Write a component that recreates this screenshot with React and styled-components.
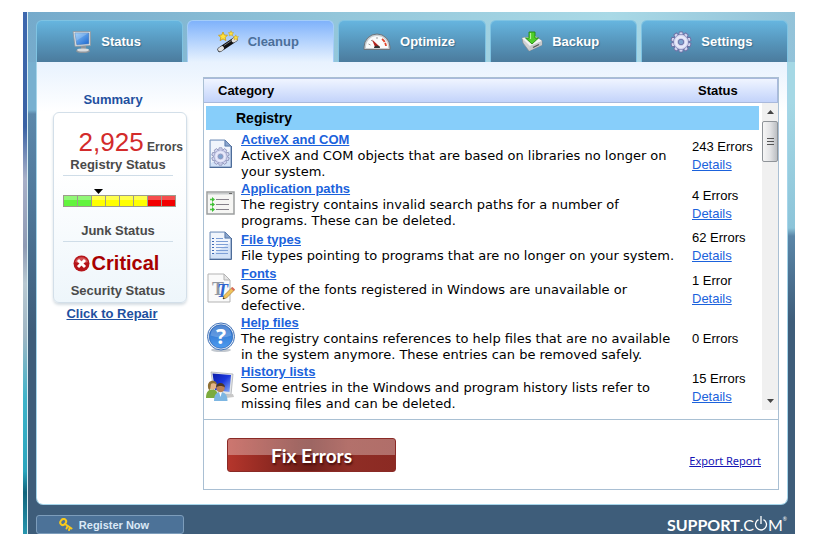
import styled, { createGlobalStyle } from "styled-components";

const GlobalStyle = createGlobalStyle`
  * {
    box-sizing: border-box;
  }
  body {
    margin: 0;
    background: #fff;
    font-family: "Liberation Sans", Arial, sans-serif;
    font-size: 13px;
    color: #000;
  }
`;

const Desktop = styled.div`
  min-height: 100vh;
  display: flex;
  padding: 12px 24px 0 23px;
`;

const Wallpaper = styled.div`
  width: 5px;
  border-right: 1px solid #d6ecf2;
  background: linear-gradient(
    #3d68ae,
    #3a62a4 22%,
    #a9b0c8 32%,
    #8f9bb4 45%,
    #b9c9d2 52%,
    #9fb6c4 62%,
    #3fb4ca 74%,
    #2aa5bd 88%,
    #11647c 92%,
    #2796ae
  );
`;

const Frame = styled.main`
  flex: 1;
  display: flex;
  flex-direction: column;
  padding: 8px 7px 0 8px;
  background:
    linear-gradient(100deg, #75aacb, #93c6da 40%, #a9d9e6 75%, #92c2d9) 0 0 /
      100% 50px no-repeat,
    linear-gradient(
        #78b0d0 98px,
        #5c88ab 102px,
        #4e7698 200px,
        #3e5d7a 320px
      )
      0 0 / 50% 100% no-repeat,
    linear-gradient(#a5d8e5 90px, #8cc4d9 216px, #5a86a8 224px, #3e5d7a 310px);
`;

const Tabs = styled.nav`
  display: grid;
  grid-template-columns: repeat(5, 1fr);
  column-gap: 4px;
`;

const Tab = styled.button`
  height: 42px;
  display: flex;
  align-items: center;
  justify-content: center;
  gap: 9px;
  padding: 0 6px 0 0;
  border: 1px solid ${(props) => (props.$active ? "#a4cdf8" : "#7fc3e2")};
  border-bottom: 0;
  border-radius: 6px 6px 0 0;
  background: ${(props) =>
    props.$active
      ? "linear-gradient(#7fb2fb, #b4d3fd 50%, #e8f2fe)"
      : "linear-gradient(#66b5df, #5797bd 50%, #4b7b9d)"};
  color: ${(props) => (props.$active ? "#4b6f99" : "#fff")};
  font: bold 13px "Liberation Sans", Arial, sans-serif;
  text-shadow: ${(props) => (props.$active ? "none" : "1px 1px 1px #3c6c8c")};
`;

const Panel = styled.div`
  display: flex;
  padding: 15px 8px 14px 16px;
  border: 1px solid #a6d5ea;
  border-top: 0;
  border-radius: 0 0 7px 7px;
  background: linear-gradient(#e8f2fe, #fff 50px);
`;

const Sidebar = styled.aside`
  width: 134px;
  margin-right: 16px;
  display: flex;
  flex-direction: column;
  align-items: center;
  padding-top: 15px;
`;

const SummaryTitle = styled.h2`
  margin: 0 14px 4px 0;
  font-size: 13px;
  line-height: 16px;
  color: #1f50a0;
`;

const Card = styled.section`
  width: 100%;
  padding: 14px 3px 0 9px;
  border: 1px solid #d3dfe9;
  border-radius: 6px;
  background: linear-gradient(#fff 30%, #eef6fb);
  box-shadow: 0 2px 3px #d5dde3;
`;

const ErrorCount = styled.div`
  height: 30px;
  text-align: right;
  font-size: 12px;
  font-weight: bold;
  line-height: 30px;
  color: #4a4a4a;
`;

const Count = styled.span`
  font-size: 26px;
  font-weight: normal;
  color: #d32b2b;
`;

const StatusLabel = styled.div`
  height: 19px;
  margin-right: 10px;
  text-align: center;
  font-weight: bold;
  line-height: 16px;
  color: #4a4a4a;
  border-bottom: ${(props) => (props.$last ? "0" : "1px solid #cfdde8")};
`;

const Meter = styled.div`
  height: 47px;
  padding-top: 11px;
`;

const Critical = styled.div`
  display: flex;
  align-items: center;
  justify-content: center;
  gap: 2px;
  height: 41px;
  padding: 2px 14px 0 0;
  font-size: 20px;
  font-weight: bold;
  color: #a80000;
`;

const RepairLink = styled.a`
  margin: 2px 16px 0 0;
  font-weight: bold;
  line-height: 18px;
  color: #1f50a0;
`;

const Results = styled.section`
  flex: 1;
  display: flex;
  flex-direction: column;
  border: 1px solid #a9bfd3;
  background: #fff;
`;

const ListArea = styled.div`
  display: grid;
  grid-template-columns: 1fr 16px;
  padding-bottom: 9px;
  border-bottom: 1px solid #a9c0d3;
`;

const Table = styled.table`
  display: contents;
`;

const TableHead = styled.thead`
  grid-column: 1 / -1;
  display: block;
  border: 1px solid #a9b9dc;
  border-width: 1px 1px 1px 0;
  background: linear-gradient(#f0f5ff, #d9e4fd 50%, #c3d3fa);
`;

const HeadRow = styled.tr`
  display: grid;
  grid-template-columns: 1fr 79px;
  height: 23px;
  padding-left: 14px;
  line-height: 23px;
  text-align: left;
`;

const TableBody = styled.tbody`
  display: block;
  height: 307px;
  overflow: hidden;
  padding: 3px 3px 0 2px;
`;

const GroupRow = styled.tr`
  display: block;
  height: 24px;
  margin-bottom: 1px;
  padding-left: 30px;
  background: #87cefa;
  font-size: 14px;
  line-height: 24px;
`;

const ItemRow = styled.tr`
  display: grid;
  grid-template-columns: 35px 1fr 67px;
  align-items: center;
  min-height: 35px;
`;

const Cell = styled.td`
  display: block;
  padding: 0;
`;

const GroupName = styled(Cell)`
  text-align: left;
`;

const IconCell = styled(Cell)`
  height: 35px;
`;

const ItemLink = styled.a`
  display: block;
  font-weight: bold;
  line-height: 17px;
  color: #1b62dc;
`;

const Description = styled.p`
  margin: 0;
  padding-right: 8px;
  font-family: "DejaVu Sans", Verdana, sans-serif;
  line-height: 16px;
`;

const StatusCell = styled(Cell)`
  line-height: 18px;
`;

const DetailsLink = styled.a`
  display: block;
  color: #1b62dc;
`;

const ScrollTrack = styled.div`
  display: flex;
  flex-direction: column;
  background: #f0f0f0;
`;

const ScrollButton = styled.button`
  height: 18px;
  padding: 0;
  border: 0;
  background: transparent;
  margin-top: ${(props) => (props.$end ? "auto" : "0")};
  display: grid;
  place-items: center;
`;

const Thumb = styled.div`
  height: 41px;
  display: grid;
  place-items: center;
  border: 1px solid #8f9499;
  border-radius: 2px;
  background: linear-gradient(90deg, #f6f6f6, #e3e4e6 50%, #bcbfc3);
`;

const Actions = styled.div`
  flex: 1;
  display: flex;
  align-items: flex-start;
  justify-content: space-between;
  padding: 18px 17px 17px 23px;
`;

const FixButton = styled.button`
  width: 169px;
  height: 34px;
  padding: 0;
  border: 1px solid #8a2a26;
  border-radius: 3px;
  background:
    linear-gradient(rgba(255, 255, 255, 0.32), rgba(255, 255, 255, 0.32)) 0 0 /
      100% 50% no-repeat,
    linear-gradient(90deg, #b5362c, #75201a 42%, #6f1e19 50%, #8f2d25 72%, #8b2a23);
  color: #fff;
  font: bold 19px Lato, sans-serif;
  text-shadow: 1px 2px 2px #4a0f0c;
`;

const ExportLink = styled.a`
  margin-top: 15px;
  font: 11px/16px "Noto Sans", Tahoma, sans-serif;
  color: #1414b4;
`;

const Footer = styled.footer`
  display: flex;
  justify-content: space-between;
  align-items: flex-start;
  padding-top: 10px;
`;

const RegisterButton = styled.button`
  width: 148px;
  height: 19px;
  display: flex;
  align-items: center;
  justify-content: center;
  gap: 6px;
  padding: 0 12px 0 0;
  border: 1px solid #7d9dbb;
  border-radius: 3px;
  background: #4c7298;
  color: #dbe9f7;
  font: bold 11px "Liberation Sans", Arial, sans-serif;
`;

const Logo = styled.div`
  display: flex;
  align-items: center;
  padding-right: 1px;
  color: #fff;
  font: 16px/19px Lato, sans-serif;
`;

const LogoBold = styled.span`
  font-weight: bold;
`;

const Registered = styled.sup`
  align-self: flex-start;
  font-size: 5px;
  line-height: 8px;
`;

function MonitorIcon() {
  return (
    <svg width="20" height="24" viewBox="0 0 20 24" aria-hidden="true">
      <defs>
        <linearGradient id="screen" x1="0" y1="0" x2="1" y2="1">
          <stop offset="0" stopColor="#8cc8fa" />
          <stop offset="1" stopColor="#1b66d0" />
        </linearGradient>
      </defs>
      <ellipse cx="11" cy="21" rx="7" ry="2" fill="#8d959c" />
      <path d="M9 16h5v4H9z" fill="#8e959c" />
      <ellipse cx="11" cy="20" rx="6" ry="1.6" fill="#d9dcdf" />
      <path d="M1 1.500h17.500v14l-15.500 1z" fill="#d9dde1" stroke="#8b959e" strokeWidth=".8" />
      <path d="M3 3h13.800v10.800l-12 1z" fill="url(#screen)" stroke="#3f74b5" strokeWidth=".5" />
      <path d="M3 3h13.500L4 11z" fill="#fff" opacity=".2" />
    </svg>
  );
}

function WandIcon() {
  const star = "M0-4.500l1.300 3 3.200.3-2.400 2.100.8 3.200L0 2.400l-2.900 1.700.8-3.200-2.400-2.100 3.200-.3z";
  return (
    <svg width="22" height="24" viewBox="0 0 22 24" aria-hidden="true">
      <path d="M3 19.500L18 9.500" stroke="#111" strokeWidth="5" strokeLinecap="round" />
      <path d="M3 19.500l2-1.300M16.500 10.500l2-1.300" stroke="#e0e0e0" strokeWidth="4" strokeLinecap="round" />
      <path d="M7 15.500l7-4.700" stroke="#777" strokeWidth="1" />
      <g fill="#ffe23f" stroke="#c99a12" strokeWidth=".8">
        <path d={star} transform="translate(6 6.500)" />
        <path d={star} transform="translate(14 3.500) scale(.6)" />
        <path d={star} transform="translate(18.800 7.500) scale(.6)" />
      </g>
    </svg>
  );
}

function GaugeIcon() {
  return (
    <svg width="28" height="18" viewBox="0 0 28 18" aria-hidden="true">
      <path d="M1 16.500V14a13 13 0 0 1 26 0v2.500z" fill="#c9ced2" stroke="#6d757c" strokeWidth="1" />
      <path d="M3 15v-1a11 11 0 0 1 22 0v1z" fill="#fbfbfb" />
      <path d="M5.500 11l2 1M8 7l1.500 1.500M14 4v2" stroke="#999" strokeWidth="1" />
      <path d="M19 6q3.500 2.500 4 7" fill="none" stroke="#e0452b" strokeWidth="1.800" strokeDasharray="4 1" />
      <path d="M9 6.500l8 7.500h-5z" fill="#b3201a" />
      <path d="M11 15a3 2.600 0 0 1 6 0z" fill="#333" />
    </svg>
  );
}

function BackupIcon() {
  return (
    <svg width="22" height="21" viewBox="0 0 22 21" aria-hidden="true">
      <path d="M1 7l13-2 7 5v4L8 20 2 12z" fill="#cfd1d3" stroke="#85898d" strokeWidth=".7" />
      <path d="M1 7l13-2 7 5-12 5z" fill="#f4f4f4" />
      <path d="M9 15l-1 5 13-6v-4z" fill="#c6c8ca" />
      <path d="M12 16.500l6-3" stroke="#555" strokeWidth="1.300" />
      <path d="M8 1h6v6h3.500L11 13 4.500 7H8z" fill="#4fce2b" stroke="#248a12" strokeWidth=".9" />
      <path d="M9.500 2v6" stroke="#b2f29b" strokeWidth="1.200" />
    </svg>
  );
}

function Gear({ size, edge = "#6b70a4" }) {
  const teeth = [0, 36, 72, 108, 144, 180, 216, 252, 288, 324];
  return (
    <svg width={size} height={size} viewBox="-12 -12 24 24" aria-hidden="true">
      <g fill="#d3d6f0" stroke={edge} strokeWidth="1">
        {teeth.map((angle) => (
          <path key={angle} d="M-2.600-7l.8-4h3.600l.8 4z" transform={`rotate(${angle})`} />
        ))}
        <circle r="8" />
      </g>
      <circle r="7.800" fill="#d3d6f0" />
      <circle r="5.500" fill="none" stroke="#e9ebfa" strokeWidth="2" />
      <circle r="3" fill="#7ea3cf" stroke={edge} strokeWidth="1" />
    </svg>
  );
}

function Page({ children }) {
  return (
    <>
      <path d="M4 2h15l6 6v21H4z" fill="#d3e2f7" stroke="#7590b8" strokeWidth="1" />
      <path d="M5 3h13v6h6v4L5 25z" fill="#fff" opacity=".65" />
      <path d="M19 2v6h6z" fill="#8ba7cf" stroke="#5f7ca8" strokeWidth="1" />
      {children}
      <path d="M3.500 29.500h22V8" fill="none" stroke="#4d6c99" strokeWidth="1" />
    </>
  );
}

function ActiveXIcon() {
  return (
    <svg width="30" height="32" viewBox="0 0 30 32" aria-hidden="true">
      <Page>
        <svg x="5" y="9" width="19" height="19" viewBox="0 0 19 19">
          <Gear size={19} edge="#8c92b8" />
        </svg>
      </Page>
    </svg>
  );
}

function PathsIcon() {
  return (
    <svg width="30" height="32" viewBox="0 0 30 32" aria-hidden="true">
      <path d="M1 5h27v22H1z" fill="#f6f6f4" stroke="#9c9e9f" strokeWidth="1.500" />
      <path d="M2 6h25v1.500H2z" fill="#c9cccd" />
      <path d="M23 6.500h3" stroke="#666" strokeWidth="1" />
      <path d="M10 12.500h13M10 17.500h13M10 22.500h13" stroke="#85818a" strokeWidth="1" />
      <path d="M4 12.500h3M4 17.500h3M4 22.500h3" stroke="#4ac73f" strokeWidth="1.500" />
      <path d="M6 10l3 2.500L6 15zM6 15l3 2.500L6 20zM6 20l3 2.500L6 25z" fill="#3fbf36" />
    </svg>
  );
}

function FileIcon() {
  return (
    <svg width="30" height="32" viewBox="0 0 30 32" aria-hidden="true">
      <Page>
        <path d="M10 8.500h7M10 11.500h12M10 14.500h12M10 17.500h12M10 20.500h12M10 23.500h12" stroke="#7d9fd6" strokeWidth="1" />
        <path d="M6 8.500h2M6 11.500h2M6 14.500h2M6 17.500h2M6 20.500h2M6 23.500h2" stroke="#3d69b5" strokeWidth="1" />
      </Page>
    </svg>
  );
}

function FontIcon() {
  return (
    <svg width="30" height="32" viewBox="0 0 30 32" aria-hidden="true">
      <path d="M2 2h16l6 6v22H2z" fill="#fafafa" stroke="#b3b3b3" strokeWidth="1" />
      <path d="M18 2v6h6z" fill="#e6e6e6" stroke="#b3b3b3" strokeWidth="1" />
      <g fontFamily="Liberation Serif, serif" fontWeight="bold" fontSize="18">
        <text x="6" y="23" fill="#9298a3">T</text>
        <text x="11" y="25" fill="#2f66cf" fontStyle="italic">T</text>
      </g>
      <path d="M17 27l1-3.500 8-8 2.500 2.500-8 8z" fill="#f0c35a" stroke="#99702a" strokeWidth=".6" />
      <path d="M25 16.500l1.500-1.500 2.500 2.500-1.500 1.500z" fill="#d96a5a" />
      <path d="M17 27l.5-1.800 1.300 1.300z" fill="#222" />
    </svg>
  );
}

function HelpIcon() {
  return (
    <svg width="30" height="32" viewBox="0 0 30 32" aria-hidden="true">
      <defs>
        <linearGradient id="help" x1="0" y1="0" x2="0" y2="1">
          <stop offset="0" stopColor="#2468c6" />
          <stop offset="1" stopColor="#4e9cf0" />
        </linearGradient>
      </defs>
      <ellipse cx="15" cy="29" rx="10" ry="2" fill="#c2c8cf" />
      <circle cx="15" cy="15.500" r="13.500" fill="#e9f2fc" stroke="#4272b6" strokeWidth="1" />
      <circle cx="15" cy="15.500" r="11.800" fill="url(#help)" stroke="#2258a8" strokeWidth=".6" />
      <path d="M4.500 14.500a10.500 10.500 0 0 1 21 0q-10 4-21 0z" fill="#fff" opacity=".2" />
      <text x="15" y="23" textAnchor="middle" fontFamily="Open Sans, sans-serif" fontWeight="bold" fontSize="21" fill="#fff">
        ?
      </text>
    </svg>
  );
}

function UsersIcon() {
  return (
    <svg width="30" height="32" viewBox="0 0 30 32" aria-hidden="true">
      <defs>
        <linearGradient id="night" x1="0" y1="0" x2="1" y2="1">
          <stop offset="0" stopColor="#0a1ca8" />
          <stop offset=".5" stopColor="#1a36dc" />
          <stop offset="1" stopColor="#8db4f8" />
        </linearGradient>
      </defs>
      <path d="M5 2l22 2-2 21-17-2z" fill="#e3e5e8" stroke="#a4a8ae" strokeWidth=".7" />
      <path d="M6.500 3.500L25 5l-1.500 17L9 20z" fill="url(#night)" />
      <path d="M20 25l7-1 1 3-8 1z" fill="#c8c8c8" />
      <path d="M0 28c0-7 3-8.500 6.500-8.500S12 22 12 28z" fill="#7bab3e" />
      <circle cx="6.500" cy="15.500" r="4" fill="#e5b487" />
      <path d="M2 17c-1-8 9-8 9-2-2-2-5-2-6-1l-1 6c-1 0-2-1-2-3z" fill="#8f7034" />
      <path d="M8 31c0-7 3-9 6.500-9s7 2 7 9z" fill="#7db6e2" />
      <path d="M13 22h3l-1.500 5z" fill="#fff" />
      <circle cx="14.500" cy="18" r="4.200" fill="#b98055" />
      <path d="M10 17.500c0-6 9-6 9 0-2-2-7-2-9 0z" fill="#4a3626" />
    </svg>
  );
}

function LevelMeter() {
  const colors = ["#62f43d", "#62f43d", "#ff0", "#ff0", "#ff0", "#ff0", "#f20000", "#f20000"];
  return (
    <svg width="113" height="20" viewBox="0 0 113 20" role="img" aria-label="Junk level">
      <path d="M31 2h9l-4.500 5z" fill="#000" />
      {colors.map((color, index) => (
        <g key={index}>
          <rect x={index * 14 + 0.5} y="8.500" width="14" height="11" fill={color} stroke="#9c9c8c" />
          <rect x={index * 14 + 1} y="9" width="13" height="4" fill="#fff" opacity=".3" />
        </g>
      ))}
    </svg>
  );
}

function CriticalIcon() {
  return (
    <svg width="17" height="17" viewBox="0 0 17 17" aria-hidden="true">
      <circle cx="8.500" cy="8.500" r="8" fill="#b5151a" />
      <path d="M2 7a6.800 6.800 0 0 1 13 0q-6.500 2.500-13 0z" fill="#e67b7b" opacity=".6" />
      <path d="M5 5l7 7M12 5l-7 7" stroke="#fff" strokeWidth="3" />
    </svg>
  );
}

function KeyIcon() {
  return (
    <svg width="14" height="13" viewBox="0 0 14 13" aria-hidden="true">
      <ellipse cx="4.200" cy="4" rx="3.200" ry="2.600" transform="rotate(-50 4.200 4)" fill="none" stroke="#f7c81e" strokeWidth="2" />
      <path d="M6 6l6.500 4.500M8.500 8l-1 2.500M11 9.700l-1 2.300" stroke="#f7c81e" strokeWidth="2" strokeLinecap="round" />
    </svg>
  );
}

function PowerO() {
  return (
    <svg width="14" height="19" viewBox="0 0 14 19" role="img" aria-label="O">
      <path d="M4.500 4.600a5.500 5.500 0 1 0 5 0" fill="none" stroke="#fff" strokeWidth="1.300" />
      <path d="M7 1v8" stroke="#fff" strokeWidth="1.300" />
    </svg>
  );
}

const tabs = [
  { label: "Status", icon: <MonitorIcon /> },
  { label: "Cleanup", icon: <WandIcon />, active: true },
  { label: "Optimize", icon: <GaugeIcon /> },
  { label: "Backup", icon: <BackupIcon /> },
  { label: "Settings", icon: <Gear size={22} /> },
];

const items = [
  {
    name: "ActiveX and COM",
    text: "ActiveX and COM objects that are based on libraries no longer on your system.",
    status: "243 Errors",
    icon: <ActiveXIcon />,
  },
  {
    name: "Application paths",
    text: "The registry contains invalid search paths for a number of programs. These can be deleted.",
    status: "4 Errors",
    icon: <PathsIcon />,
  },
  {
    name: "File types",
    text: "File types pointing to programs that are no longer on your system.",
    status: "62 Errors",
    icon: <FileIcon />,
  },
  {
    name: "Fonts",
    text: "Some of the fonts registered in Windows are unavailable or defective.",
    status: "1 Error",
    icon: <FontIcon />,
  },
  {
    name: "Help files",
    text: "The registry contains references to help files that are no available in the system anymore. These entries can be removed safely.",
    status: "0 Errors",
    clean: true,
    icon: <HelpIcon />,
  },
  {
    name: "History lists",
    text: "Some entries in the Windows and program history lists refer to missing files and can be deleted.",
    status: "15 Errors",
    icon: <UsersIcon />,
  },
];

function Summary() {
  return (
    <Sidebar>
      <SummaryTitle>Summary</SummaryTitle>
      <Card>
        <ErrorCount>
          <Count>2,925</Count> Errors
        </ErrorCount>
        <StatusLabel>Registry Status</StatusLabel>
        <Meter>
          <LevelMeter />
        </Meter>
        <StatusLabel>Junk Status</StatusLabel>
        <Critical>
          <CriticalIcon />
          Critical
        </Critical>
        <StatusLabel $last>Security Status</StatusLabel>
      </Card>
      <RepairLink href="#repair">Click to Repair</RepairLink>
    </Sidebar>
  );
}

function CategoryTable() {
  return (
    <Table>
      <TableHead>
        <HeadRow>
          <Cell as="th">Category</Cell>
          <Cell as="th">Status</Cell>
        </HeadRow>
      </TableHead>
      <TableBody>
        <GroupRow>
          <GroupName as="th">Registry</GroupName>
        </GroupRow>
        {items.map((item) => (
          <ItemRow key={item.name}>
            <IconCell>{item.icon}</IconCell>
            <Cell>
              <ItemLink href="#category">{item.name}</ItemLink>
              <Description>{item.text}</Description>
            </Cell>
            <StatusCell>
              {item.status}
              {!item.clean && <DetailsLink href="#details">Details</DetailsLink>}
            </StatusCell>
          </ItemRow>
        ))}
      </TableBody>
    </Table>
  );
}

function Scrollbar() {
  return (
    <ScrollTrack>
      <ScrollButton aria-label="Scroll up">
        <svg width="7" height="4" viewBox="0 0 7 4">
          <path d="M0 4l3.500-4L7 4z" fill="#444" />
        </svg>
      </ScrollButton>
      <Thumb>
        <svg width="7" height="9" viewBox="0 0 7 9">
          <path d="M0 1.500h7M0 4.500h7M0 7.500h7" stroke="#555" />
        </svg>
      </Thumb>
      <ScrollButton $end aria-label="Scroll down">
        <svg width="7" height="4" viewBox="0 0 7 4">
          <path d="M0 0l3.500 4L7 0z" fill="#444" />
        </svg>
      </ScrollButton>
    </ScrollTrack>
  );
}

function App() {
  return (
    <>
      <GlobalStyle />
      <Desktop>
        <Wallpaper />
        <Frame>
          <Tabs>
            {tabs.map((tab) => (
              <Tab key={tab.label} $active={tab.active}>
                {tab.icon}
                {tab.label}
              </Tab>
            ))}
          </Tabs>
          <Panel>
            <Summary />
            <Results>
              <ListArea>
                <CategoryTable />
                <Scrollbar />
              </ListArea>
              <Actions>
                <FixButton>Fix Errors</FixButton>
                <ExportLink href="#export">Export Report</ExportLink>
              </Actions>
            </Results>
          </Panel>
          <Footer>
            <RegisterButton>
              <KeyIcon />
              Register Now
            </RegisterButton>
            <Logo>
              <LogoBold>SUPPORT</LogoBold>.C
              <PowerO />M<Registered>®</Registered>
            </Logo>
          </Footer>
        </Frame>
      </Desktop>
    </>
  );
}

export default App;
